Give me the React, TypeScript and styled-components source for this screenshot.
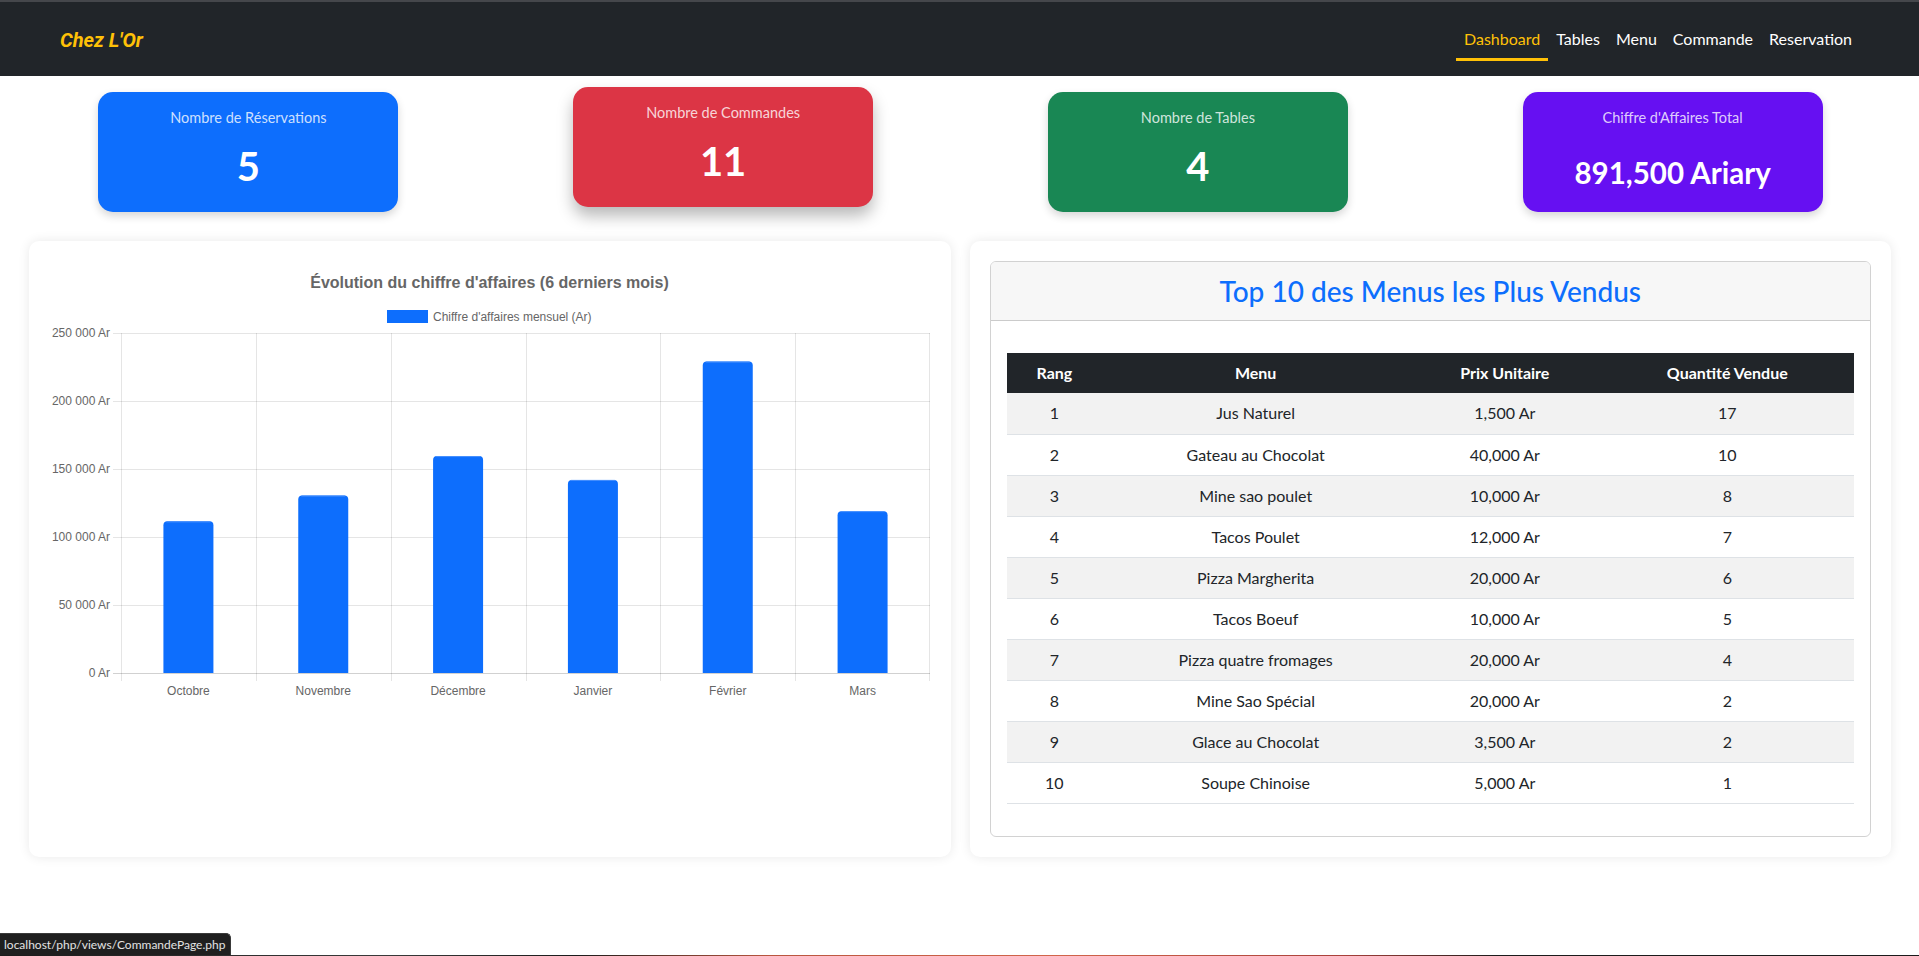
import React from "react";
import styled, { createGlobalStyle } from "styled-components";

const GlobalStyle = createGlobalStyle`
  *, *::before, *::after { box-sizing: border-box; }
  html, body { margin: 0; padding: 0; background: #fff; }
  body {
    font-family: "Segoe UI", Lato, "Liberation Sans", sans-serif;
    color: #212529;
    overflow: hidden;
  }
`;

const Page = styled.div`
  min-height: 956px;
  background: #fff;
`;

/* ---------- Navbar ---------- */
const Navbar = styled.nav`
  height: 76px;
  border-top: 2px solid #45474b;
  background: #212529;
  display: flex;
  align-items: center;
  justify-content: space-between;
  padding: 0 59px 0 60px;
`;

const Brand = styled.a`
  font-family: Roboto, "Liberation Sans", sans-serif;
  font-style: italic;
  font-weight: 700;
  font-size: 20px;
  line-height: 30px;
  color: #ffc107;
  text-decoration: none;
  padding-top: 1px;
`;

const NavLinks = styled.div`
  display: flex;
  align-items: center;
`;

const NavLink = styled.a<{ $active?: boolean }>`
  padding: 10px 8px 7px;
  font-size: 16px;
  line-height: 24px;
  color: ${(p) => (p.$active ? "#ffc107" : "#ffffff")};
  border-bottom: 3px solid ${(p) => (p.$active ? "#ffc107" : "transparent")};
  text-decoration: none;
`;

/* ---------- Stat cards ---------- */
const StatsRow = styled.section`
  display: grid;
  grid-template-columns: repeat(4, 1fr);
  padding: 16px 9px 0 11px;
`;

const StatCard = styled.div<{ $bg: string; $lifted?: boolean }>`
  justify-self: center;
  width: 300px;
  height: 120px;
  border-radius: 15px;
  background: ${(p) => p.$bg};
  color: #fff;
  display: flex;
  flex-direction: column;
  align-items: center;
  padding: 17px 20px 22px;
  box-shadow: ${(p) =>
    p.$lifted ? "0 9px 16px rgba(0, 0, 0, 0.28)" : "0 4px 9px rgba(0, 0, 0, 0.16)"};
  transform: ${(p) => (p.$lifted ? "translateY(-5px)" : "none")};
`;

const StatLabel = styled.div`
  font-size: 14.5px;
  line-height: 17px;
  color: rgba(255, 255, 255, 0.8);
`;

const StatValue = styled.div<{ $small?: boolean }>`
  margin-top: auto;
  font-weight: 700;
  font-size: ${(p) => (p.$small ? "29.5px" : "40px")};
  line-height: ${(p) => (p.$small ? "34px" : "48px")};
  color: #fff;
`;

/* ---------- Panels ---------- */
const PanelsRow = styled.section`
  display: grid;
  grid-template-columns: 1fr 1fr;
  column-gap: 19px;
  padding: 0 28px 0 29px;
  margin-top: 29px;
`;

const Panel = styled.div`
  background: #fff;
  border-radius: 10px;
  box-shadow: 0 0 12px rgba(0, 0, 0, 0.09);
  padding: 20px;
`;

const ChartSvg = styled.svg`
  display: block;
  font-family: "Liberation Sans", Arial, sans-serif;
`;

const InnerCard = styled.div`
  border: 1px solid rgba(0, 0, 0, 0.175);
  border-radius: 6px;
  overflow: hidden;
`;

const CardHeader = styled.div`
  background: #f7f7f7;
  border-bottom: 1px solid rgba(0, 0, 0, 0.175);
  padding: 12px 16px;
  text-align: center;
`;

const CardTitle = styled.h4`
  margin: 0;
  font-size: 28px;
  line-height: 34px;
  font-weight: 500;
  color: #0d6efd;
`;

const CardBody = styled.div`
  padding: 32px 16px 16px;
`;

const Table = styled.table`
  width: 100%;
  border-collapse: collapse;
  margin: 0 0 16px;
  font-size: 16px;
`;

const Col = styled.col<{ $w: string }>`
  width: ${(p) => p.$w};
`;

const Th = styled.th`
  background: #212529;
  color: #fff;
  font-weight: 700;
  padding: 8px;
  line-height: 24px;
  text-align: center;
`;

const Td = styled.td<{ $striped: boolean }>`
  padding: 8px;
  line-height: 24px;
  height: 41px;
  text-align: center;
  color: #212529;
  border-bottom: 1px solid #dee2e6;
  background: ${(p) => (p.$striped ? "#f2f2f2" : "#ffffff")};
`;

/* ---------- Browser overlays ---------- */
const StatusBubble = styled.div`
  position: fixed;
  left: 0;
  bottom: 1px;
  height: 22px;
  padding: 0 5px 0 4px;
  background: #1f1f1f;
  color: #e3e3e3;
  font-size: 12px;
  line-height: 21px;
  border-top: 1px solid #3a3a3a;
  border-right: 1px solid #3a3a3a;
  border-top-right-radius: 5px;
`;

const BottomEdge = styled.div`
  position: fixed;
  left: 0;
  right: 0;
  bottom: 0;
  height: 1px;
  background: linear-gradient(
    90deg,
    #1b1b1b 0%,
    #3a3a3a 20%,
    #1b1b1b 30%,
    #b9553e 40%,
    #d2654a 55%,
    #a9403a 70%,
    #1b1b1b 78%,
    #1b1b1b 100%
  );
`;

/* ---------- Data ---------- */
const stats = [
  { label: "Nombre de Réservations", value: "5", bg: "#0d6efd" },
  { label: "Nombre de Commandes", value: "11", bg: "#dc3545", lifted: true },
  { label: "Nombre de Tables", value: "4", bg: "#198754" },
  { label: "Chiffre d'Affaires Total", value: "891,500 Ariary", bg: "#6610f2", small: true },
];

const months = [
  { name: "Octobre", value: 111500 },
  { name: "Novembre", value: 130500 },
  { name: "Décembre", value: 159500 },
  { name: "Janvier", value: 142000 },
  { name: "Février", value: 229000 },
  { name: "Mars", value: 119000 },
];

const topMenus = [
  ["1", "Jus Naturel", "1,500 Ar", "17"],
  ["2", "Gateau au Chocolat", "40,000 Ar", "10"],
  ["3", "Mine sao poulet", "10,000 Ar", "8"],
  ["4", "Tacos Poulet", "12,000 Ar", "7"],
  ["5", "Pizza Margherita", "20,000 Ar", "6"],
  ["6", "Tacos Boeuf", "10,000 Ar", "5"],
  ["7", "Pizza quatre fromages", "20,000 Ar", "4"],
  ["8", "Mine Sao Spécial", "20,000 Ar", "2"],
  ["9", "Glace au Chocolat", "3,500 Ar", "2"],
  ["10", "Soupe Chinoise", "5,000 Ar", "1"],
];

/* ---------- Chart ---------- */
const CW = 881;
const CH = 445;
const PL = 72;
const PR = 881;
const PT = 72;
const PB = 412;
const MAX = 250000;
const catW = (PR - PL) / months.length;
const yFor = (v: number) => PB - (v / MAX) * (PB - PT);
const ticks = [0, 50000, 100000, 150000, 200000, 250000];
const fmt = (v: number) =>
  (v === 0 ? "0" : `${Math.floor(v / 1000)} ${String(v % 1000).padStart(3, "0")}`) + " Ar";

function barPath(x: number, y: number, w: number, h: number, r: number) {
  return `M${x},${y + h} L${x},${y + r} Q${x},${y} ${x + r},${y} L${x + w - r},${y} Q${x + w},${y} ${x + w},${y + r} L${x + w},${y + h} Z`;
}

function RevenueChart() {
  return (
    <ChartSvg width={CW} height={CH} viewBox={`0 0 ${CW} ${CH}`}>
      <text x={CW / 2} y={27} textAnchor="middle" fontSize={16} fontWeight={700} fill="#666">
        Évolution du chiffre d'affaires (6 derniers mois)
      </text>
      <rect x={338.5} y={49.5} width={40} height={12} fill="#0d6efd" stroke="#0d6efd" />
      <text x={384} y={60} fontSize={12} fill="#666">
        Chiffre d'affaires mensuel (Ar)
      </text>

      {ticks.map((t) => (
        <g key={t}>
          <line
            x1={PL - 8}
            x2={PR}
            y1={Math.round(yFor(t)) + 0.5}
            y2={Math.round(yFor(t)) + 0.5}
            stroke={t === 0 ? "rgba(0,0,0,0.18)" : "rgba(0,0,0,0.1)"}
          />
          <text x={61} y={yFor(t) + 4} textAnchor="end" fontSize={12} fill="#666">
            {fmt(t)}
          </text>
        </g>
      ))}

      {months.map((_, i) => (
        <line
          key={`v${i}`}
          x1={Math.round(PL + i * catW) + 0.5}
          x2={Math.round(PL + i * catW) + 0.5}
          y1={PT}
          y2={PB + 8}
          stroke="rgba(0,0,0,0.1)"
        />
      ))}
      <line x1={PR - 0.5} x2={PR - 0.5} y1={PT} y2={PB + 8} stroke="rgba(0,0,0,0.1)" />

      {months.map((m, i) => {
        const cx = PL + catW * (i + 0.5);
        const y = yFor(m.value);
        return (
          <g key={m.name}>
            <path d={barPath(cx - 25, y, 50, PB - y, 4)} fill="#0d6efd" />
            <line x1={cx - 22} x2={cx + 22} y1={y + 0.5} y2={y + 0.5} stroke="#4a92fe" strokeWidth={1} />
            <text x={cx} y={434} textAnchor="middle" fontSize={12} fill="#666">
              {m.name}
            </text>
          </g>
        );
      })}
    </ChartSvg>
  );
}

export default function App() {
  return (
    <Page>
      <GlobalStyle />
      <Navbar>
        <Brand href="#">Chez L'Or</Brand>
        <NavLinks>
          <NavLink href="#" $active>
            Dashboard
          </NavLink>
          <NavLink href="#">Tables</NavLink>
          <NavLink href="#">Menu</NavLink>
          <NavLink href="#">Commande</NavLink>
          <NavLink href="#">Reservation</NavLink>
        </NavLinks>
      </Navbar>

      <StatsRow>
        {stats.map((s) => (
          <StatCard key={s.label} $bg={s.bg} $lifted={s.lifted}>
            <StatLabel>{s.label}</StatLabel>
            <StatValue $small={s.small}>{s.value}</StatValue>
          </StatCard>
        ))}
      </StatsRow>

      <PanelsRow>
        <Panel>
          <RevenueChart />
        </Panel>
        <Panel>
          <InnerCard>
            <CardHeader>
              <CardTitle>Top 10 des Menus les Plus Vendus</CardTitle>
            </CardHeader>
            <CardBody>
              <Table>
                <colgroup>
                  <Col $w="11.3%" />
                  <Col $w="36.2%" />
                  <Col $w="22.6%" />
                  <Col $w="29.9%" />
                </colgroup>
                <thead>
                  <tr>
                    <Th>Rang</Th>
                    <Th>Menu</Th>
                    <Th>Prix Unitaire</Th>
                    <Th>Quantité Vendue</Th>
                  </tr>
                </thead>
                <tbody>
                  {topMenus.map((row, i) => (
                    <tr key={row[0]}>
                      {row.map((cell, j) => (
                        <Td key={j} $striped={i % 2 === 0}>
                          {cell}
                        </Td>
                      ))}
                    </tr>
                  ))}
                </tbody>
              </Table>
            </CardBody>
          </InnerCard>
        </Panel>
      </PanelsRow>

      <StatusBubble>localhost/php/views/CommandePage.php</StatusBubble>
      <BottomEdge />
    </Page>
  );
}
